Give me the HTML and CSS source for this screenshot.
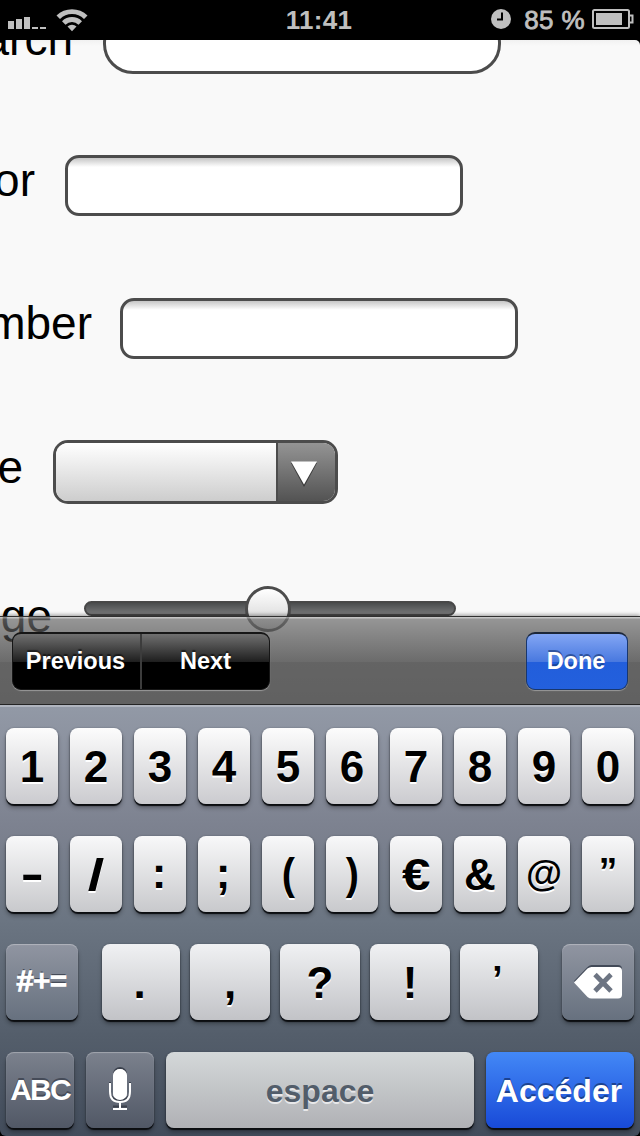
FILE: index.html
```
<!DOCTYPE html>
<html lang="fr">
<head>
<meta charset="utf-8">
<title>Form</title>
<link rel="stylesheet" href="styles.css">
</head>
<body>
<header class="status">
  <div class="status-left">
    <svg class="signal" width="40" height="14" viewBox="0 0 40 14"><path d="M0 5h6v8H0zM8 3h6v10H8zM16 1h6v12h-6zM24 11h6v2h-6zM32 11h6v2h-6z"/></svg>
    <svg class="wifi" width="32" height="24" viewBox="0 0 32 24"><path d="M0.5 7.5A22.2 22.2 0 0 1 31.500 7.500L28 11A17.200 17.200 0 0 0 4 11Z"/><path d="M6 13.200A14.300 14.300 0 0 1 26 13.200L22.500 16.700A9.300 9.300 0 0 0 9.500 16.700Z"/><path d="M11.500 18.600A6.500 6.500 0 0 1 20.500 18.600L16 23.300Z"/></svg>
  </div>
  <div class="clock">11:41</div>
  <div class="status-right">
    <svg class="alarm" width="20" height="20" viewBox="0 0 20 20"><circle cx="10" cy="10" r="10"/><path class="hands" d="M11 3.500V10.500H6"/></svg>
    <span class="percent">85 %</span>
    <svg class="battery" width="42" height="20" viewBox="0 0 42 20"><rect class="shell" x="1" y="1" width="36" height="18" rx="1.500"/><rect x="4" y="4" width="26" height="12"/><path class="shell" d="M37 6.500h3.500v7H37"/></svg>
  </div>
</header>

<section class="page">
  <div class="form">
    <div class="row"><label class="label w-search">arch</label><div class="field search"></div></div>
    <div class="row"><label class="label w-color">or</label><div class="field"></div></div>
    <div class="row"><label class="label w-number">mber</label><div class="field"></div></div>
    <div class="row date"><label class="label w-date">e</label>
      <div class="select"><div class="select-value"></div><div class="select-arrow"><svg width="28" height="26" viewBox="0 0 28 26"><path fill="#3a3a3a" d="M1 2h26L14 26z"/><path fill="#fff" d="M1 .5h26L14 23.500z"/></svg></div></div>
    </div>
    <div class="row range"><label class="label w-range">ge</label><div class="slider"><div class="thumb"></div></div></div>
  </div>
  <div class="toolbar">
    <div class="segments"><div class="segment">Previous</div><div class="segment next">Next</div></div>
    <div class="done">Done</div>
  </div>
</section>

<section class="keyboard">
  <div class="keys digits">
    <div class="key">1</div><div class="key">2</div><div class="key">3</div><div class="key">4</div><div class="key">5</div><div class="key">6</div><div class="key">7</div><div class="key">8</div><div class="key">9</div><div class="key">0</div>
  </div>
  <div class="keys digits symbols">
    <div class="key"><span class="dash">-</span></div><div class="key"><span class="slash">/</span></div><div class="key"><span class="colon">:</span></div><div class="key"><span class="colon">;</span></div><div class="key"><span class="paren">(</span></div><div class="key"><span class="paren">)</span></div><div class="key"><span class="euro">€</span></div><div class="key">&amp;</div><div class="key"><span class="at">@</span></div><div class="key"><span class="quote">”</span></div>
  </div>
  <div class="keys punctuation">
    <div class="key dark more">#+=</div>
    <div class="marks"><div class="key">.</div><div class="key">,</div><div class="key">?</div><div class="key">!</div><div class="key"><span class="quote">’</span></div></div>
    <div class="key dark"><svg class="delete" width="50" height="36" viewBox="0 0 50 36"><path fill="#424a58" d="M1 16L14 2.500Q16 0 18.500 0H45Q49 0 49 4V28Q49 31 45 31H18z"/><path fill="#fff" d="M1 17.500L14.500 3.500Q16.500 2 18.500 2H45Q49 2 49 6V29.500Q49 33.500 45 33.500H18.500Q16.500 33.500 14.500 32z"/><path fill="none" stroke="#6d7583" stroke-width="4.800" d="M22 9.500L38 26M38 9.500L22 26"/></svg></div>
  </div>
  <div class="keys bottom">
    <div class="key dark abc">ABC</div>
    <div class="key dark"><svg width="24" height="46" viewBox="0 0 24 46"><rect x="5" y="0" width="14" height="30" rx="7" fill="#3b414d"/><rect x="5" y="2" width="14" height="31" rx="7" fill="#fff"/><path fill="none" stroke="#3b414d" stroke-width="2" d="M2 15V24Q2 33 12 33Q22 33 22 24V15M5 39.500H19"/><path fill="none" stroke="#fff" stroke-width="2" d="M2 16V24.500Q2 35 12 35Q22 35 22 24.500V16M12 35V42M5 42H19"/><rect x="5" y="2" width="14" height="31" rx="7" fill="#fff"/></svg></div>
    <div class="key space">espace</div>
    <div class="key go">Accéder</div>
  </div>
</section>
</body>
</html>
```
FILE: styles.css
```
* { box-sizing: border-box; }
body {
  margin: 0;
  width: 640px;
  height: 1136px;
  overflow: hidden;
  background: #000;
  font-family: "Liberation Sans", Arial, sans-serif;
}

/* Status bar */
.status {
  display: grid;
  grid-template-columns: 1fr auto 1fr;
  height: 40px;
  background: #000;
  color: #bfbfbf;
  font-size: 24px;
  line-height: 40px;
}
.status svg { fill: #bfbfbf; }
.status-left { display: flex; padding: 8px 0 0 8px; }
.signal { margin-top: 8px; }
.wifi { margin-left: 8px; }
.clock { font-size: 26px; font-weight: bold; letter-spacing: .3px; margin-left: -2px; }
.status-right { display: flex; justify-content: flex-end; padding-right: 6px; }
.alarm { margin: 9px 13px 0 0; }
.status .hands { fill: none; stroke: #000; stroke-width: 2; }
.percent { font-size: 26px; letter-spacing: .4px; line-height: 41px; -webkit-text-stroke: .8px #bfbfbf; white-space: nowrap; }
.battery { margin: 9px 0 0 7px; }
.status .shell { fill: none; stroke: #bfbfbf; stroke-width: 2; }

/* Web page */
.page {
  position: relative;
  height: 664px;
  overflow: hidden;
  background: linear-gradient(#f1f1f1, #f9f9f9 6px);
  border-radius: 0 5px 0 0;
}
.form { margin-top: -27.5px; }
.row { display: flex; align-items: flex-start; height: 142.5px; }
.label {
  display: flex;
  justify-content: flex-end;
  flex: none;
  margin-top: 2px;
  color: #000;
  font-size: 46px;
  line-height: 46px;
}
.w-search { width: 73px; margin: 3px 30px 0 0; }
.w-color { width: 35px; margin-right: 30px; }
.w-number { width: 92px; margin-right: 28px; }
.w-date { width: 23px; margin-right: 30px; }
.w-range { width: 52px; margin-right: 32px; }
.date .label { margin-top: 4px; }
.field {
  width: 398px;
  height: 61px;
  border: 3px solid #4c4c4c;
  border-radius: 14px;
  background: linear-gradient(#c6c6c6, #fff 9px);
}
.search { border-radius: 30px; background: #fff; }
.select {
  display: flex;
  width: 285px;
  height: 63.500px;
  border: 3px solid #4c4c4c;
  border-radius: 15px;
  overflow: hidden;
}
.select-value { flex: 1; background: linear-gradient(#fff, #cdcdcd); }
.select-arrow {
  display: flex;
  justify-content: center;
  width: 59px;
  padding-top: 18px;
  padding-right: 5px;
  border-left: 2px solid #4c4c4c;
  background: linear-gradient(#949494, #535353);
}
.range .label { margin-top: 10px; }
.slider {
  display: flex;
  justify-content: center;
  width: 372px;
  height: 15px;
  margin-top: 18px;
  border: 2px solid #484848;
  border-radius: 8px;
  background: linear-gradient(#4a4c4d, #777879);
}
.thumb {
  flex: none;
  width: 46px;
  height: 46px;
  margin: -17px 4px 0 0;
  border: 3px solid #4c4c4c;
  border-radius: 50%;
  background: linear-gradient(#fff, #d0d0d0);
}

/* Translucent bar lying over the page */
.toolbar {
  position: absolute;
  left: 0;
  right: 0;
  bottom: 0;
  display: flex;
  justify-content: space-between;
  height: 88px;
  padding: 15px 12px 0;
  border-top: 1px solid #303030;
  background: linear-gradient(rgba(180,180,180,.75) 1px, rgba(111,111,111,.72) 2px, rgba(17,17,17,.61) 45px, rgba(0,0,0,.6) 45px, rgba(0,0,0,.61));
  background-clip: padding-box;
  box-shadow: 0 -1px 4px rgba(0,0,0,.4);
  color: #fff;
  font-size: 23.500px;
  font-weight: bold;
  line-height: 54px;
  text-align: center;
}
.segments {
  display: flex;
  width: 258px;
  height: 58px;
  border: 1px solid #161616;
  border-top-width: 2px;
  border-radius: 9px;
  background: linear-gradient(#707070, #1e1e1e 28px, #000 28px);
  box-shadow: 0 1px 1px #999;
  text-shadow: 0 -2px 1px rgba(0,0,0,.5);
}
.segment { width: 128px; padding-right: 2px; }
.next { border-left: 2px solid #3c3c3c; width: 130px; padding-right: 0; }
.done {
  width: 102px;
  height: 58px;
  padding-right: 2px;
  border: 1px solid #18376f;
  border-top: 2px solid #1c2739;
  border-radius: 9px;
  background: linear-gradient(#83a6f4, #4878df 28px, #225edb 28px, #2360dd);
  box-shadow: 0 1px 1px #999;
  text-shadow: 0 -2px 0 rgba(20,50,110,.6);
}

/* Keyboard */
.keyboard {
  display: flex;
  flex-direction: column;
  gap: 32px;
  height: 432px;
  padding: 23px 6px 0;
  border-top: 1px solid #242424;
  border-radius: 0 0 6px 6px;
  background: linear-gradient(#b0b5bf 2px, #9299a6 2px, #7d8290 120px, #6b7582 215px, #545e6b 330px, #424c5b);
}
.keys { display: flex; justify-content: space-between; height: 76px; }
.key {
  display: flex;
  justify-content: center;
  height: 76px;
  border-radius: 8px;
  background: linear-gradient(#fcfcfc, #cbcbcf);
  box-shadow: 0 2px 1px #0b0d10, 0 4px 4px rgba(0,0,0,.3), 0 0 2px rgba(30,35,45,.35);
  color: #000;
  font-size: 44px;
  font-weight: bold;
  line-height: 77px;
  text-shadow: 0 2px 0 #fff;
}
.digits .key { width: 52px; }
.symbols .key { background: linear-gradient(#f8f8f9, #c8c9cc); }
.dash { transform: translateY(-1px) scaleX(1.600); }
.slash { transform: scaleX(1.350); }
.colon { transform: translate(-1px, -2px); }
.paren { transform: translateY(-1px) scaleX(.900); }
.at { font-size: 37px; transform: translateY(-1px); }
.quote { font-size: 37px; transform: translateY(-3px); }
.euro { transform: scaleX(1.160); }
.marks { display: flex; gap: 10px; }
.marks .key { width: 80px; background: linear-gradient(#f0f1f3, #c2c3c7); }
.marks .key:first-child, .marks .key:last-child { width: 78px; }
.marks .key:first-child { padding-right: 3px; }
.marks .key:last-child { padding-right: 3px; }
.punctuation .dark { width: 72px; }
.key.dark {
  background: linear-gradient(#9095a1, #67717f);
  color: #fff;
  text-shadow: 0 -2px 0 #454b58;
  box-shadow: 0 2px 1px #0b0d10, 0 4px 4px rgba(0,0,0,.3), inset 0 1px 1px rgba(255,255,255,.3);
}
.key.more { font-size: 29px; font-weight: normal; -webkit-text-stroke: 1.500px #fff; letter-spacing: 0; line-height: 75px; }
.delete { margin: 21px 0 0; }
.bottom { gap: 12px; }
.bottom .key.dark { width: 68px; align-items: center; background: linear-gradient(#7b818d, #515866); }
.key.abc { font-size: 30px; letter-spacing: -1.800px; line-height: 76px; }
.key.space { flex: 1; font-size: 32px; line-height: 79px; color: #525d6a; background: linear-gradient(#d4d8d9, #b0b1b5); text-shadow: 0 2px 0 #e8e8ea; }
.key.go { width: 148px; padding-right: 2px; font-size: 32px; line-height: 79px; color: #fff; background: linear-gradient(#4388f6, #184ad8); text-shadow: 0 -2px 0 #1c4290; }
```
